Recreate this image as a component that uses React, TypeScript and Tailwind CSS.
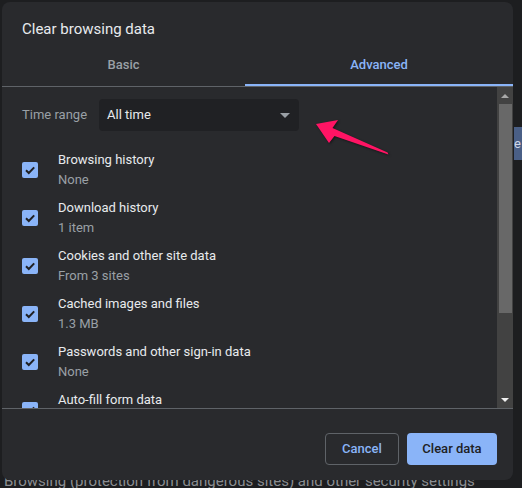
import React from "react";

const items = [
  { title: "Browsing history", sub: "None" },
  { title: "Download history", sub: "1 item" },
  { title: "Cookies and other site data", sub: "From 3 sites" },
  { title: "Cached images and files", sub: "1.3 MB" },
  { title: "Passwords and other sign-in data", sub: "None" },
  { title: "Auto-fill form data", sub: "" },
];

function CheckBox() {
  return (
    <div className="flex h-4 w-4 shrink-0 items-center justify-center rounded-[2px] bg-[#8ab4f8]">
      <svg viewBox="0 0 16 16" className="h-4 w-4">
        <polyline points="4,8.2 6.8,11 12.2,5.4" fill="none" stroke="#202124" strokeWidth="2" />
      </svg>
    </div>
  );
}

export default function App() {
  return (
    <div
      className="relative h-[488px] w-[522px] overflow-hidden bg-[#1d1e20] p-[2px]"
      style={{ fontFamily: "Roboto, 'Liberation Sans', sans-serif" }}
    >
      {/* page behind the dialog */}
      <div className="absolute right-0 top-[127px] flex h-[33px] w-[8px] items-center bg-[#4a5f86] text-[13px] text-[#cfd8e8]">
        e
      </div>
      <div className="absolute left-[4px] top-[470px] whitespace-nowrap text-[15px] leading-[22px] text-[#8a8d91]">
        Browsing (protection from dangerous sites) and other security settings
      </div>

      {/* dialog */}
      <div className="relative flex h-[478px] w-[511px] flex-col overflow-hidden rounded-[8px] bg-[#292a2d]">
        <div className="px-5 pt-[17px] text-[15px] leading-5 text-[#e8eaed]">Clear browsing data</div>

        {/* tabs */}
        <div className="mt-[7px] flex border-b border-[#5f6368]">
          <div className="flex h-[40px] w-[243px] items-center justify-center pb-[2px] text-[13px] font-medium text-[#9aa0a6]">
            Basic
          </div>
          <div className="flex h-[40px] flex-1 items-center justify-center border-b-2 border-[#8ab4f8] text-[13px] font-medium text-[#8ab4f8]">
            Advanced
          </div>
        </div>

        {/* scroll area */}
        <div className="flex h-[322px] border-b border-[#5f6368]">
          <div className="flex-1 overflow-hidden px-5 pt-3">
            <div className="flex items-center gap-3">
              <span className="text-[13px] text-[#9aa0a6]">Time range</span>
              <div className="flex h-8 w-[200px] items-center justify-between rounded-[4px] bg-[#202124] pl-2 pr-[9px] text-[13px] text-[#e8eaed]">
                <span>All time</span>
                <span className="h-0 w-0 border-x-[5px] border-t-[5px] border-x-transparent border-t-[#9aa0a6]" />
              </div>
            </div>
            <div className="mt-[19px] flex flex-col gap-2">
              {items.map((it) => (
                <div key={it.title} className="flex items-center gap-5">
                  <CheckBox />
                  <div className="text-[13px] leading-5">
                    <div className="text-[#e8eaed]">{it.title}</div>
                    <div className="h-5 text-[#9aa0a6]">{it.sub}</div>
                  </div>
                </div>
              ))}
            </div>
          </div>

          {/* scrollbar */}
          <div className="flex w-4 flex-col items-center bg-[#424242]">
            <div className="flex h-[17px] items-center justify-center">
              <span className="h-0 w-0 border-x-[4px] border-b-[4px] border-x-transparent border-b-[#a8a8a8]" />
            </div>
            <div className="h-[209px] w-[13px] bg-[#686868]" />
            <div className="flex-1" />
            <div className="flex h-[17px] items-center justify-center">
              <span className="h-0 w-0 border-x-[4px] border-t-[4px] border-x-transparent border-t-[#f0f0f0]" />
            </div>
          </div>
        </div>

        {/* footer */}
        <div className="flex justify-end gap-2 pr-4 pt-6">
          <button className="h-8 w-[74px] rounded-[4px] border border-[#5f6368] text-[13px] font-medium text-[#8ab4f8]">
            Cancel
          </button>
          <button className="h-8 w-[90px] rounded-[4px] bg-[#8ab4f8] text-[13px] font-medium text-[#202124]">
            Clear data
          </button>
        </div>
      </div>

      {/* annotation arrow */}
      <svg className="pointer-events-none absolute left-0 top-0 h-[488px] w-[522px]" viewBox="0 0 522 488">
        <polygon
          points="316,124 338,120 332.5,128 387.6,152.4 388.4,154.6 334.5,136 329,143"
          fill="#ff1464"
          style={{ filter: "drop-shadow(1px 1px 1px rgba(0,0,0,0.5))" }}
        />
      </svg>
    </div>
  );
}
